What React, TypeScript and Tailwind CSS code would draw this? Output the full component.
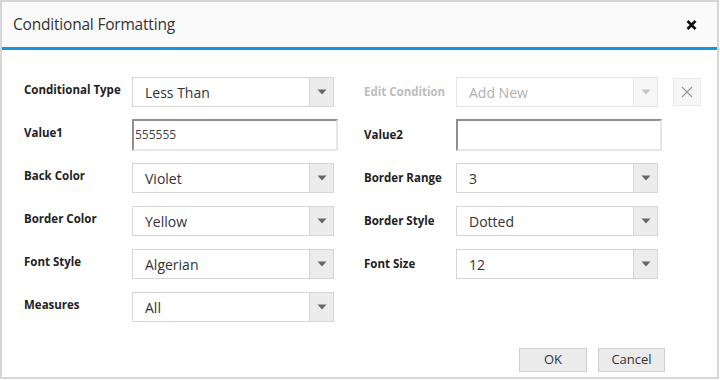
import React from 'react'

const font = { fontFamily: '"Open Sans", "Noto Sans", Arial, sans-serif' }

interface DropProps {
    value: string
    width?: string
    disabled?: boolean
}

const Caret = ({ disabled }: { disabled?: boolean }) => (
    <svg width="10" height="6" viewBox="0 0 10 6">
        <path d="M0.5 0.5 L9.5 0.5 L5 5.5 Z" fill={disabled ? '#c4c4c4' : '#666666'} />
    </svg>
)

const Dropdown: React.FC<DropProps> = ({ value, disabled }) => (
    <div
        className={`flex h-[30px] w-[202px] items-stretch border bg-white ${disabled ? 'border-[#e4e4e4]' : 'border-[#d6d6d6]'}`}
    >
        <div className={`flex flex-1 items-center pl-[12px] text-[14px] ${disabled ? 'text-[#b0b0b0]' : 'text-[#333333]'}`}>{value}</div>
        <div
            className={`flex w-[24px] items-center justify-center border-l ${disabled ? 'border-[#e4e4e4] bg-[#f6f6f6]' : 'border-[#d6d6d6] bg-[#ececec]'}`}
        >
            <Caret disabled={disabled} />
        </div>
    </div>
)

const TextInput = ({ value }: { value: string }) => (
    <div className="flex h-[32px] w-[206px] items-center border-2 border-t-[#8f8f8f] border-l-[#8f8f8f] border-r-[#e6e6e6] border-b-[#e6e6e6] bg-white pl-[1px] text-[12px] text-[#444444]">
        {value}
    </div>
)

const Label = ({ text, width, muted, left }: { text: string; width: string; muted?: boolean; left?: boolean }) => (
    <div
        className={`${width} text-[11.5px] font-bold ${left ? '-mt-[5px]' : ''} ${muted ? 'text-[#bdbdbd]' : 'text-[#222222]'}`}
    >
        {text}
    </div>
)

type Cell = { label: string; kind: 'drop' | 'input'; value: string; disabled?: boolean } | null

const rows: [Cell, Cell][] = [
    [
        { label: 'Conditional Type', kind: 'drop', value: 'Less Than' },
        { label: 'Edit Condition', kind: 'drop', value: 'Add New', disabled: true },
    ],
    [
        { label: 'Value1', kind: 'input', value: '555555' },
        { label: 'Value2', kind: 'input', value: '' },
    ],
    [
        { label: 'Back Color', kind: 'drop', value: 'Violet' },
        { label: 'Border Range', kind: 'drop', value: '3' },
    ],
    [
        { label: 'Border Color', kind: 'drop', value: 'Yellow' },
        { label: 'Border Style', kind: 'drop', value: 'Dotted' },
    ],
    [
        { label: 'Font Style', kind: 'drop', value: 'Algerian' },
        { label: 'Font Size', kind: 'drop', value: '12' },
    ],
    [{ label: 'Measures', kind: 'drop', value: 'All' }, null],
]

export default function App() {
    return (
        <div className="h-[380px] w-[720px] bg-white" style={font}>
            <div className="flex h-[379px] w-[719px] flex-col border-2 border-[#d6d6d6] bg-white">
                {/* header */}
                <div className="flex h-[48px] items-center justify-between border-b-[3px] border-[#1697dc] bg-[#fafafa] pl-[11px] pr-[20px]">
                    <span className="text-[15.5px] tracking-[-0.2px] text-[#333333]">Conditional Formatting</span>
                    <svg width="11" height="10" viewBox="0 0 11 10">
                        <path d="M1.5 1 L9.5 9 M9.5 1 L1.5 9" stroke="#111111" strokeWidth="2.6" strokeLinecap="butt" />
                    </svg>
                </div>

                {/* body */}
                <div className="flex flex-1 flex-col pl-[22px] pt-[27px]">
                    <div className="flex flex-col gap-[13px]">
                        {rows.map(([l, r], i) => (
                            <div key={i} className="flex h-[30px] items-center">
                                <div className="flex w-[340px] items-center">
                                    {l && (
                                        <>
                                            <Label text={l.label} width="w-[108px]" left />
                                            {l.kind === 'drop' ? <Dropdown value={l.value} /> : <TextInput value={l.value} />}
                                        </>
                                    )}
                                </div>
                                {r && (
                                    <div className="flex items-center">
                                        <Label text={r.label} width="w-[92px]" muted={r.disabled} />
                                        {r.kind === 'drop' ? (
                                            <Dropdown value={r.value} disabled={r.disabled} />
                                        ) : (
                                            <TextInput value={r.value} />
                                        )}
                                        {i === 0 && (
                                            <div className="ml-[15px] flex h-[28px] w-[28px] items-center justify-center border border-[#e8e8e8] bg-[#f6f6f6]">
                                                <svg width="12" height="12" viewBox="0 0 12 12">
                                                    <path d="M1 1 L11 11 M11 1 L1 11" stroke="#9a9a9a" strokeWidth="1.2" />
                                                </svg>
                                            </div>
                                        )}
                                    </div>
                                )}
                            </div>
                        ))}
                    </div>

                    {/* footer */}
                    <div className="mt-[26px] flex justify-end gap-[11px] pr-[52px]">
                        <button className="h-[24px] w-[68px] border border-[#cfcfcf] bg-[#ebebeb] text-[13px] text-[#333333]">OK</button>
                        <button className="h-[24px] w-[67px] border border-[#cfcfcf] bg-[#ebebeb] text-[13px] text-[#333333]">Cancel</button>
                    </div>
                </div>
            </div>
        </div>
    )
}
